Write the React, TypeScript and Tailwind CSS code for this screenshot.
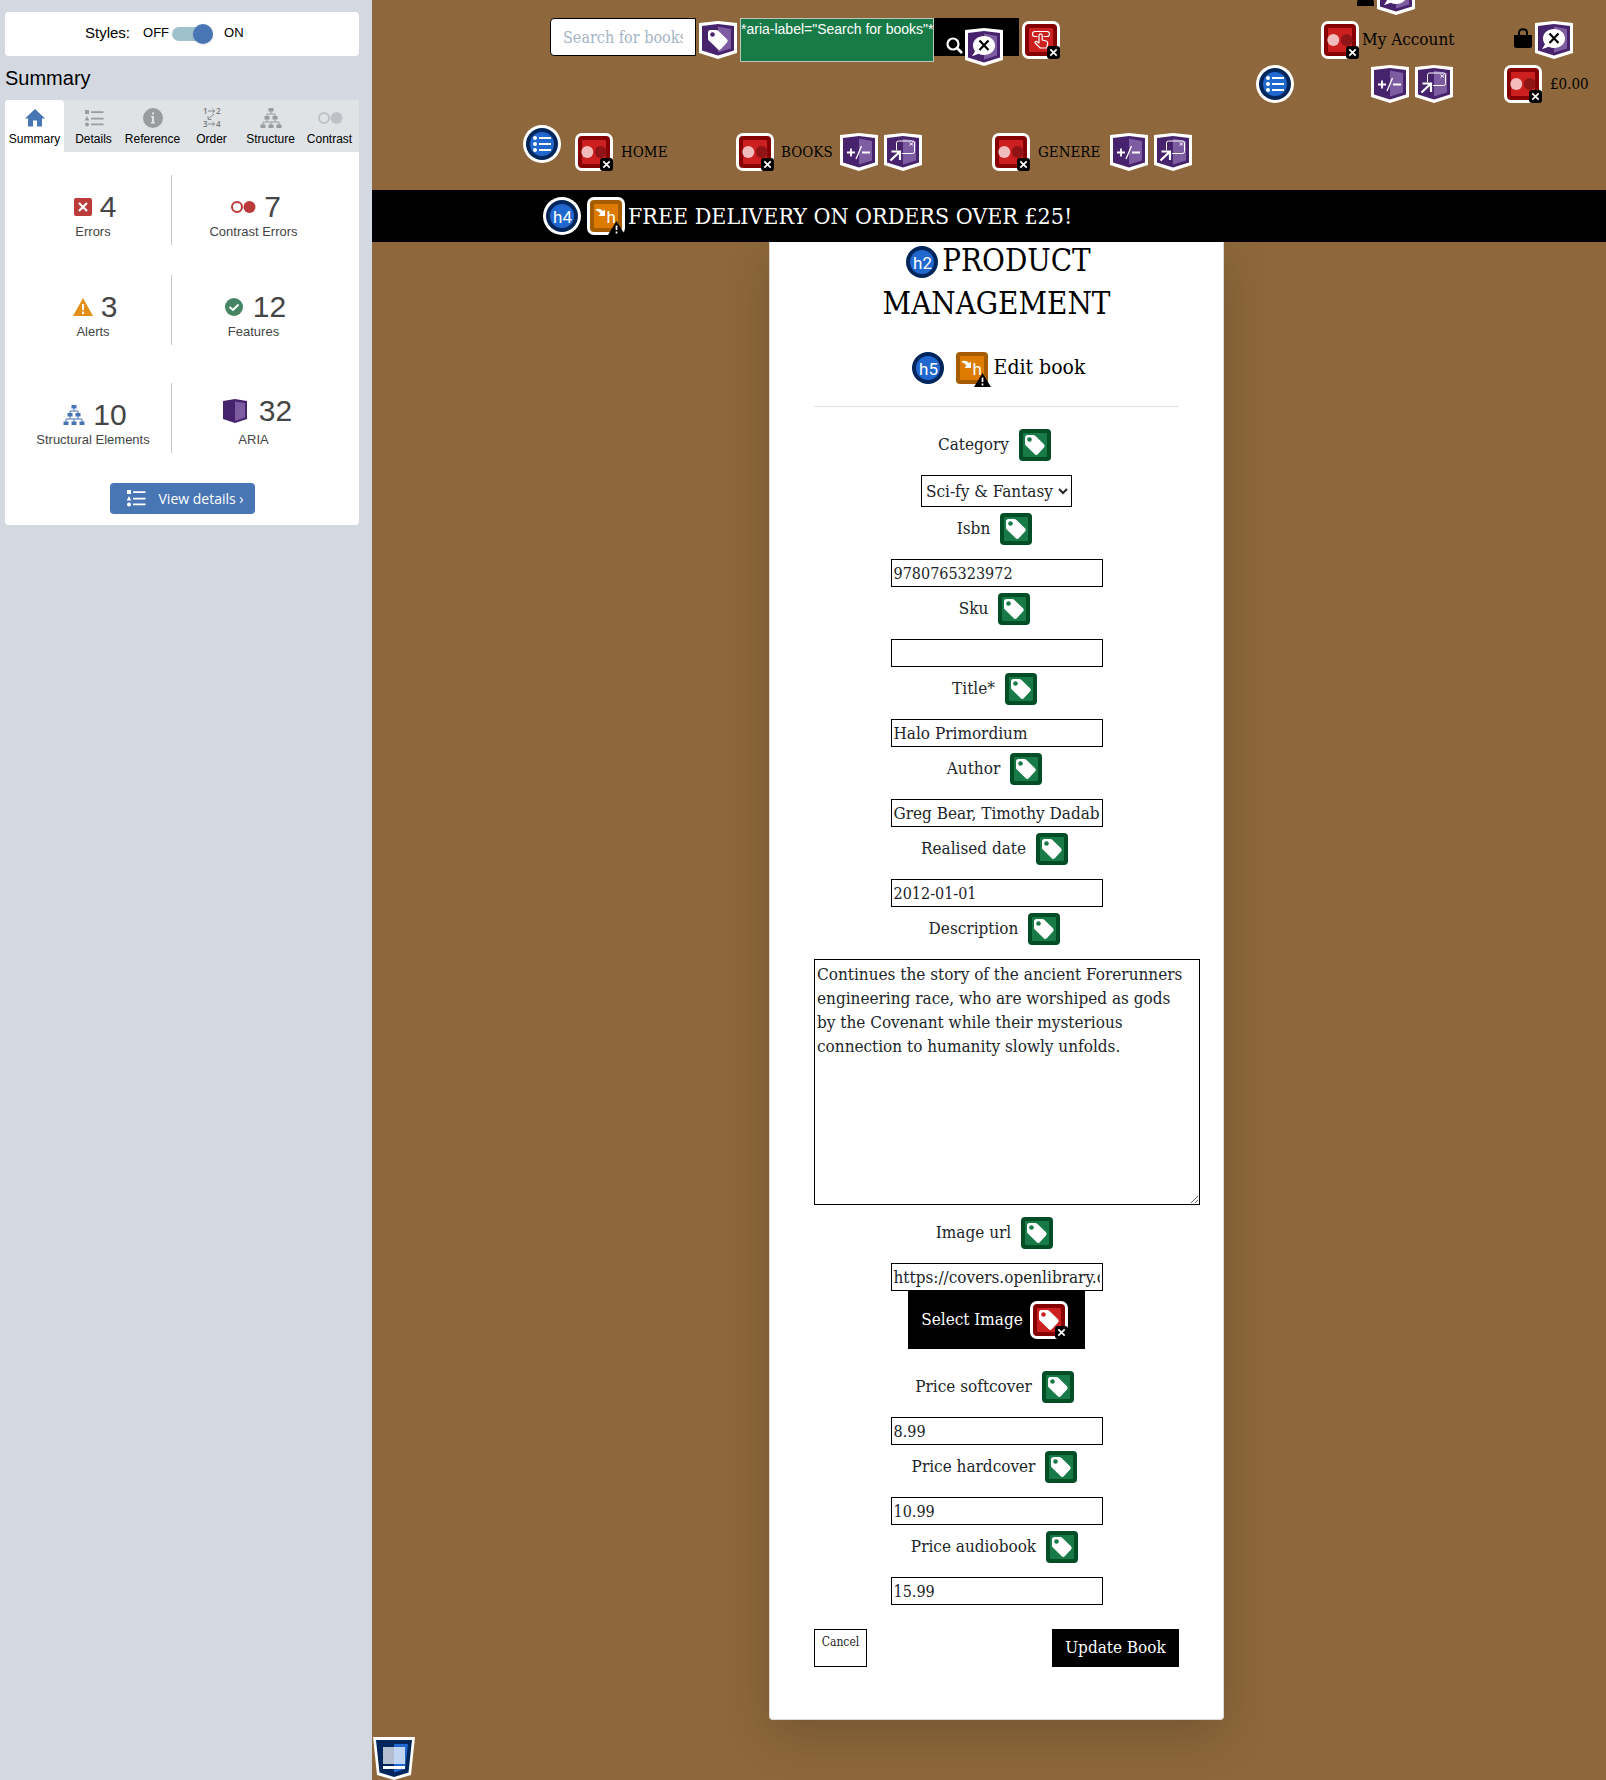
import type { ReactNode } from "react";

const SERIF = "font-['DejaVu_Serif_Condensed','DejaVu_Serif',serif]";

/* ---------- Accessibility markers ---------- */

type MarkerProps = { ring?: boolean; children: ReactNode; label: string };

function Marker({ ring = false, children, label }: MarkerProps) {
  return (
    <svg
      role="img"
      aria-label={label}
      viewBox={ring ? "0 0 38 38" : "3 3 32 32"}
      className={ring ? "size-[38px] shrink-0 overflow-visible" : "size-8 shrink-0 overflow-visible"}
    >
      {children}
    </svg>
  );
}

const TAG = "M9 11.500Q9 9 11.500 9H17Q18.500 9 19.500 10L28 18.300Q29.500 19.900 28 21.600L22 28Q20.200 29.800 18.500 28L9.800 19.500Q9 18.700 9 17.400Z";

function ErrorBadge() {
  return (
    <g>
      <rect x="25" y="25" width="13" height="13" rx="3" fill="#000" />
      <path d="M28.3 28.3l6.4 6.4M34.7 28.3l-6.4 6.4" stroke="#fff" strokeWidth="1.7" />
    </g>
  );
}

function Square({ ring, outer, inner }: { ring: boolean; outer: string; inner: string }) {
  return (
    <g>
      {ring && <rect width="38" height="38" rx="7" fill="#fff" />}
      <rect x="3" y="3" width="32" height="32" rx="4" fill={outer} />
      <rect x="7" y="7" width="24" height="24" rx="1" fill={inner} />
    </g>
  );
}

function ContrastMarker() {
  return (
    <Marker ring label="Very low contrast">
      <Square ring outer="#850000" inner="#cc1f1f" />
      <circle cx="12.3" cy="19" r="6" fill="#f2bcbc" />
      <circle cx="25.7" cy="19" r="6" fill="#8f1416" />
      <ErrorBadge />
    </Marker>
  );
}

function MissingLabelMarker() {
  return (
    <Marker ring label="Missing form label">
      <Square ring outer="#850000" inner="#cc1f1f" />
      <path d={TAG} fill="#fff" />
      <circle cx="13.5" cy="13.5" r="2.3" fill="#cc1f1f" />
      <ErrorBadge />
    </Marker>
  );
}

function EmptyButtonMarker() {
  return (
    <Marker ring label="Empty button">
      <Square ring outer="#850000" inner="#cc1f1f" />
      <path
        d="M15.500 15.500H13Q10.500 15.500 10.500 13T13 10.500H25Q27.500 10.500 27.500 13T25 15.500H21.500M17 22V14.500a1.600 1.600 0 0 1 3.200 0V19l4 1q1.800 .6 1.500 2.500L24.700 27h-6.500l-5-5q-.6-1.800 1.300-1.600z"
        fill="none"
        stroke="#fff"
        strokeWidth="1.200"
        strokeLinejoin="round"
      />
      <ErrorBadge />
    </Marker>
  );
}

function LabelMarker() {
  return (
    <Marker label="Form label">
      <Square ring={false} outer="#004d26" inner="#177a47" />
      <path d={TAG} fill="#fff" />
      <circle cx="13.5" cy="13.5" r="2.3" fill="#177a47" />
    </Marker>
  );
}

function HeadingMarker({ level, ring = false }: { level: number; ring?: boolean }) {
  return (
    <Marker ring={ring} label={`Heading level ${level}`}>
      {ring && <circle cx="19" cy="19" r="19" fill="#fff" />}
      <circle cx="19" cy="19" r="16" fill="#00265c" />
      <circle cx="19" cy="19" r="12" fill="#2068cf" />
      <text x="19.500" y="25.500" textAnchor="middle" fontSize="17" fill="#fff" fontFamily="Roboto, sans-serif">
        h{level}
      </text>
    </Marker>
  );
}

function SkippedHeadingMarker({ ring = false }: { ring?: boolean }) {
  return (
    <Marker ring={ring} label="Skipped heading level">
      <Square ring={ring} outer="#a65c00" inner="#dc7b00" />
      <path d="M8 13q4-3 8 1l2-1.500V19h-6.500l2-2.500q-2-3-5.500-3.500z" fill="#fff" />
      <text x="19.500" y="25.500" fontSize="17" fill="#fff" fontFamily="Roboto, sans-serif">
        h
      </text>
      <path d="M29.500 24L38 38H21z" fill="#000" />
      <path d="M29.500 28.500v4.500M29.500 34.500v2" stroke="#fff" strokeWidth="1.700" />
    </Marker>
  );
}

function ListMarker() {
  return (
    <Marker ring label="Unordered list">
      <circle cx="19" cy="19" r="19" fill="#fff" />
      <circle cx="19" cy="19" r="16" fill="#00265c" />
      <circle cx="19" cy="19" r="12" fill="#2068cf" />
      <path d="M16 13h12M16 19h12M16 25h12" stroke="#fff" strokeWidth="2" />
      <circle cx="12" cy="13" r="2" fill="#fff" />
      <circle cx="12" cy="19" r="2" fill="#fff" />
      <circle cx="12" cy="25" r="2" fill="#fff" />
    </Marker>
  );
}

function Aria({ label, children }: { label: string; children: ReactNode }) {
  return (
    <Marker ring label={label}>
      <path d="M0 2L19 0 38 2V32L19 38 0 32z" fill="#fff" />
      <path d="M3 5L19 3 35 5V29.500L19 34.500 3 29.500z" fill="#47226d" />
      <path d="M19 5.500L32 8V27.500L19 31.500z" fill="#7d5ca2" />
      {children}
    </Marker>
  );
}

const AriaLabelMarker = () => (
  <Aria label="ARIA label">
    <path d={TAG} fill="#fff" />
    <circle cx="13.5" cy="13.5" r="2.3" fill="#47226d" />
  </Aria>
);

const AriaHiddenMarker = () => (
  <Aria label="ARIA hidden">
    <path d="M19 8c6.200 0 11 4.100 11 9.500S25.200 27 19 27c-2 0-3.800-.4-5.400-1.200L7 28.200l3-4.900C8.700 21.700 8 19.700 8 17.500 8 12.100 12.800 8 19 8z" fill="#fff" />
    <path d="M14.500 12.500l9 9.500M23.500 12.500l-9 9.500" stroke="#000" strokeWidth="2.200" />
  </Aria>
);

const AriaExpandedMarker = () => (
  <Aria label="ARIA expanded">
    <path d="M7 19.500h8M11 15.500v8M22 19.500h8" stroke="#fff" strokeWidth="1.800" />
    <path d="M21.500 13l-5.500 13" stroke="#fff" strokeWidth="1.300" />
  </Aria>
);

const AriaPopupMarker = () => (
  <Aria label="ARIA popup">
    <path d="M12.500 17V10q0-2 2-2h14q2 0 2 2v8.500q0 2-2 2H18" fill="none" stroke="#fff" strokeWidth="1" />
    <path d="M25.500 9.500l3.500 3M29 9.500l-3.500 3" stroke="#fff" strokeWidth="0.900" />
    <path d="M6.500 27.500L16 18.500M7.500 18.500H16V27" fill="none" stroke="#fff" strokeWidth="2.200" />
  </Aria>
);

/* ---------- Sidebar drawings ---------- */

function ListGlyph() {
  return (
    <svg viewBox="0 0 20 17" className="h-[17px] w-5" fill="currentColor" aria-hidden="true">
      <path d="M1 0h4v4H1zM3 6l2.300 4.500H.7zM7 1.200h12.500v1.700H7zM7 7.700h12.500v1.700H7zM7 13.500h12.500v1.700H7z" />
      <circle cx="3" cy="14.500" r="2" />
    </svg>
  );
}

function TreeGlyph() {
  return (
    <svg viewBox="0 0 22 20" className="h-5 w-[22px]" fill="currentColor" aria-hidden="true">
      <path d="M8.500 0h5v3.500h-5zM4.500 8h5v3.500h-5zM12.500 8h5v3.500h-5zM.5 16.500h5V20h-5zM8.500 16.500h5V20h-5zM16.500 16.500h5V20h-5z" />
      <path d="M11 3v3M7 8V6h8v2M7 11v3M15 11v3M3 17v-3h16v3M11 14v3" fill="none" stroke="currentColor" strokeWidth="1" />
    </svg>
  );
}

function ContrastGlyph() {
  return (
    <svg viewBox="0 0 26 14" className="h-[14px] w-[26px]" aria-hidden="true">
      <circle cx="7" cy="7" r="5" fill="none" stroke="currentColor" strokeWidth="2" />
      <circle cx="19.500" cy="7" r="6" fill="currentColor" />
    </svg>
  );
}

function HomeGlyph() {
  return (
    <svg viewBox="0 0 20 18" className="h-[18px] w-5" fill="#4876b5" aria-hidden="true">
      <path d="M10 0l10 9.500h-3V17.500h-5v-6H8v6H3V9.500H0z" />
    </svg>
  );
}

function InfoGlyph() {
  return (
    <svg viewBox="0 0 20 20" className="size-5" aria-hidden="true">
      <circle cx="10" cy="10" r="10" fill="#999c9e" />
      <path d="M9 4.500h2v2H9zM8 8h3v6h1v1.500H8V14h1V9.500H8z" fill="#dfe3e6" />
    </svg>
  );
}

function OrderGlyph() {
  return (
    <svg viewBox="-2 -4 24 30" className="-my-1 h-[30px] w-6 overflow-visible" aria-hidden="true">
      <g fontFamily="Open Sans, sans-serif" fontWeight="600" fontSize="8" fill="#77797b">
        <text x="1" y="7">1</text>
        <text x="14" y="7">2</text>
        <text x="1" y="20">3</text>
        <text x="14" y="20">4</text>
      </g>
      <path d="M6 4h7M10.500 2l2.200 2-2.200 2M6 17h7M10.500 15l2.200 2-2.200 2M12 7l-6 5M6 9v3.500h3.500" fill="none" stroke="#88898b" strokeWidth="1" />
    </svg>
  );
}

function Tab({ label, icon, active = false }: { label: string; icon: ReactNode; active?: boolean }) {
  return (
    <button
      type="button"
      role="tab"
      aria-selected={active}
      className={
        active
          ? "flex flex-1 basis-0 flex-col items-center rounded-t bg-white pt-2 text-xs text-black"
          : "flex flex-1 basis-0 flex-col items-center pt-2 text-xs text-black"
      }
    >
      <span className="flex h-5 items-center text-[#999c9e]">{icon}</span>
      <span className="mt-[3px] leading-4">{label}</span>
    </button>
  );
}

function Stat({ icon, value, label, divided = false, raised = false }: { icon: ReactNode; value: string; label: string; divided?: boolean; raised?: boolean }) {
  return (
    <div
      className={
        divided
          ? "flex h-[70px] w-[157px] flex-col items-center border-r border-[#c4c4c4] text-[#454545]"
          : "flex h-[70px] w-[163px] flex-col items-center text-[#454545]"
      }
    >
      <div className={raised ? "mt-3 mb-1 flex h-8 items-center gap-3 pl-2" : "mt-4 flex h-8 items-center gap-2 pl-1"}>
        {icon}
        <span className="text-[30px] leading-8">{value}</span>
      </div>
      <span className="mt-px text-[13px] leading-4">{label}</span>
    </div>
  );
}

function Sidebar() {
  return (
    <aside className="w-[372px] shrink-0 bg-[#d4d9e1] px-[5px] pt-3 font-['Liberation_Sans',Arial,sans-serif] text-black">
      <div className="mr-2 flex h-11 items-center rounded bg-white pb-[2px] pl-20">
        <span className="text-[15px]">Styles:</span>
        <label className="ml-[13px] flex items-center text-[13px]">
          <span>OFF</span>
          <input type="checkbox" role="switch" aria-label="Styles" defaultChecked className="peer sr-only" />
          <span className="mx-[3px] mt-[2px] flex h-[14px] w-[41px] items-center justify-end rounded-full bg-[#9fc1cb]">
            <span className="size-[20px] shrink-0 rounded-full bg-[#4876b5] shadow" />
          </span>
          <span className="ml-2">ON</span>
        </label>
      </div>
      <h1 className="mt-2 mb-2 text-[20px] leading-7">Summary</h1>
      <section className="mr-2 rounded bg-white pb-[11px]">
        <div role="tablist" className="flex h-[52px] rounded-t bg-[#dfe3e6]">
          <Tab active label="Summary" icon={<HomeGlyph />} />
          <Tab label="Details" icon={<ListGlyph />} />
          <Tab label="Reference" icon={<InfoGlyph />} />
          <Tab label="Order" icon={<OrderGlyph />} />
          <Tab label="Structure" icon={<TreeGlyph />} />
          <Tab label="Contrast" icon={<span className="text-[#bec2c6]"><ContrastGlyph /></span>} />
        </div>
        <div className="flex pt-[23px] pl-[10px]">
          <Stat
            divided
            value="4"
            label="Errors"
            icon={
              <svg viewBox="0 0 18 18" className="size-[18px]" aria-hidden="true">
                <rect width="18" height="18" rx="2" fill="#bb3a3a" />
                <path d="M5 5l8 8M13 5l-8 8" stroke="#fff" strokeWidth="2.200" />
              </svg>
            }
          />
          <Stat value="7" label="Contrast Errors" icon={<span className="text-[#bb3a3a]"><ContrastGlyph /></span>} />
        </div>
        <div className="flex pt-[30px] pl-[10px]">
          <Stat
            divided
            value="3"
            label="Alerts"
            icon={
              <svg viewBox="0 0 20 18" className="h-[18px] w-5" aria-hidden="true">
                <path d="M10 0l10 18H0z" fill="#e28f1b" />
                <path d="M10 6v6M10 13.500v2.500" stroke="#fff" strokeWidth="2" />
              </svg>
            }
          />
          <Stat
            value="12"
            label="Features"
            icon={
              <svg viewBox="0 0 18 18" className="mr-[2px] size-[18px]" aria-hidden="true">
                <circle cx="9" cy="9" r="9" fill="#458564" />
                <path d="M4.500 9l3.500 3 5.500-5.500" fill="none" stroke="#fff" strokeWidth="2" />
              </svg>
            }
          />
        </div>
        <div className="flex pt-[38px] pl-[10px]">
          <Stat divided value="10" label="Structural Elements" icon={<span className="text-[#4876b5]"><TreeGlyph /></span>} />
          <Stat
            raised
            value="32"
            label="ARIA"
            icon={
              <svg viewBox="0 0 24 24" className="size-6" aria-hidden="true">
                <path d="M0 2L12 0l12 2v18l-12 4L0 20z" fill="#47226d" />
                <path d="M12 2.500L22 4v14.500L12 22z" fill="#7d5ca2" />
              </svg>
            }
          />
        </div>
        <button
          type="button"
          className="mx-auto mt-[30px] flex h-[31px] w-[145px] items-center gap-[13px] rounded bg-[#4876b5] pl-4 font-['Open_Sans',sans-serif] text-[14px] text-white"
        >
          <ListGlyph />
          <span>View details ›</span>
        </button>
      </section>
    </aside>
  );
}

/* ---------- Site header ---------- */

function SearchGlyph() {
  return (
    <svg viewBox="0 0 17 17" className="size-[17px]" aria-hidden="true">
      <circle cx="7" cy="7" r="5.500" fill="none" stroke="#fff" strokeWidth="2.200" />
      <path d="M11 11l5 5" stroke="#fff" strokeWidth="2.600" />
    </svg>
  );
}

function BagGlyph() {
  return (
    <svg viewBox="0 0 18 20" className="-mt-1 h-5 w-[18px]" aria-hidden="true">
      <path d="M0 7h18v10.500Q18 20 15.500 20h-13Q0 20 0 17.500z" fill="#000" />
      <path d="M5 9V5q0-3.800 4-3.800T13 5v4" fill="none" stroke="#000" strokeWidth="2" />
    </svg>
  );
}

function SiteHeader() {
  return (
    <header className="h-[190px] text-black">
      <div className="flex h-[125px] items-start">
        <form className="relative ml-[178px] flex pt-[18px]" onSubmit={(e) => e.preventDefault()}>
          <input
            type="text"
            aria-label="Search for books"
            placeholder="Search for books"
            className="h-[38px] w-[146px] rounded-l border border-black bg-white px-3 text-base placeholder:text-[#a5b5c3]"
          />
          <span className="mt-[3px] ml-[3px]"><AriaLabelMarker /></span>
          <span className="ml-[3px] h-11 w-[194px] border border-[#b9c6b9] bg-[#177a47] pt-[2px] font-['Liberation_Sans',Arial,sans-serif] text-[14px] leading-4 whitespace-nowrap text-white">
            *aria-label="Search for books"*
          </span>
          <button type="button" aria-label="Search" className="flex h-[38px] w-[85px] items-start gap-[2px] bg-black pt-[10px] pl-3">
            <span className="mt-[9px]"><SearchGlyph /></span>
            <AriaHiddenMarker />
          </button>
          <span className="mt-[3px] ml-[3px]"><EmptyButtonMarker /></span>
        </form>
        <div className="mr-4 ml-auto flex gap-[49px]">
          <div className="-mt-[23px] flex w-[199px] flex-col gap-[6px]">
            <div className="flex items-center gap-[3px] pl-[101px]">
              <svg viewBox="0 0 17 20" className="h-5 w-[17px]" aria-hidden="true">
                <circle cx="8.500" cy="5" r="5" />
                <path d="M0 20v-3q0-5 5-5h7q5 0 5 5v3z" />
              </svg>
              <AriaHiddenMarker />
            </div>
            <div className="flex items-center gap-[3px] pl-[65px]">
              <ContrastMarker />
              <a href="#account" className="text-[17px] whitespace-nowrap">My Account</a>
            </div>
            <div className="flex items-center">
              <ListMarker />
              <span className="ml-[77px] flex gap-[6px]">
                <AriaExpandedMarker />
                <AriaPopupMarker />
              </span>
            </div>
          </div>
          <div className="flex w-[86px] flex-col gap-[6px] pt-[21px]">
            <div className="flex items-center gap-[3px] pl-[10px]">
              <BagGlyph />
              <AriaHiddenMarker />
            </div>
            <a href="#bag" className="flex items-center gap-2 text-[15px]">
              <ContrastMarker />
              £0.00
            </a>
          </div>
        </div>
      </div>
      <nav className="flex pl-[151px]">
        <ListMarker />
        <div className="mt-2 flex h-[38px]">
          <a href="#home" className="ml-[14px] flex w-[161px] items-center gap-2 text-[15px]">
            <ContrastMarker />
            HOME
          </a>
          <div className="flex w-[256px] items-center gap-[6px]">
            <a href="#books" className="flex w-[98px] items-center gap-[7px] text-[15px]">
              <ContrastMarker />
              BOOKS
            </a>
            <AriaExpandedMarker />
            <AriaPopupMarker />
          </div>
          <div className="flex items-center gap-[6px]">
            <a href="#genere" className="flex w-28 items-center gap-2 text-[15px]">
              <ContrastMarker />
              GENERE
            </a>
            <AriaExpandedMarker />
            <AriaPopupMarker />
          </div>
        </div>
      </nav>
    </header>
  );
}

/* ---------- Form ---------- */

function LabelRow({ id, label }: { id: string; label: string }) {
  return (
    <div className="mt-[6px] mb-[14px] flex h-8 justify-center gap-[10px] pr-1">
      <label htmlFor={id} className="text-[17px] leading-[30px]">{label}</label>
      <LabelMarker />
    </div>
  );
}

function Field({ id, label, value, numeric = false }: { id: string; label: string; value: string; numeric?: boolean }) {
  return (
    <div>
      <LabelRow id={id} label={label} />
      <input
        id={id}
        type="text"
        inputMode={numeric ? "decimal" : "text"}
        defaultValue={value}
        className={
          numeric
            ? "mx-auto block h-7 w-[212px] border border-black bg-white px-[2px] text-base"
            : "mx-auto block h-7 w-[212px] border border-black bg-white px-[2px] text-[17px]"
        }
      />
    </div>
  );
}

const DESCRIPTION =
  "Continues the story of the ancient Forerunners engineering race, who are worshiped as gods by the Covenant while their mysterious connection to humanity slowly unfolds.";

function ProductForm() {
  return (
    <section className="w-[455px] rounded-b border border-t-0 border-[#dedbd6] bg-white px-11 pb-[52px] text-[#212529] shadow-[0_16px_48px_rgba(0,0,0,0.18)]">
      <h2 className="text-center text-[31px] leading-[43px] text-black">
        <span className="flex h-10 justify-center gap-1 pl-1">
          <span className="mt-1"><HeadingMarker level={2} /></span>
          <span className="leading-9">PRODUCT</span>
        </span>
        MANAGEMENT
      </h2>
      <h5 className="mt-[27px] flex h-8 justify-center gap-[6px] pl-1 text-[21px] leading-[30px] text-black">
        <span className="mr-[6px]"><HeadingMarker level={5} /></span>
        <SkippedHeadingMarker />
        Edit book
      </h5>
      <hr className="mt-[22px] border-[#e2e2e2]" />
      <form className="pt-4" onSubmit={(e) => e.preventDefault()}>
        <LabelRow id="category" label="Category" />
        <select
          id="category"
          defaultValue="scifi"
          className="mx-auto block h-8 w-[151px] border border-black bg-white text-[17px]"
        >
          <option value="scifi">Sci-fy &amp; Fantasy</option>
        </select>
        <Field id="isbn" label="Isbn" value="9780765323972" numeric />
        <Field id="sku" label="Sku" value="" />
        <Field id="title" label="Title*" value="Halo Primordium" />
        <Field id="author" label="Author" value="Greg Bear, Timothy Dadabo" />
        <Field id="date" label="Realised date" value="2012-01-01" numeric />
        <LabelRow id="description" label="Description" />
        <textarea
          id="description"
          defaultValue={DESCRIPTION}
          className="block h-[246px] w-[386px] resize border border-black bg-white py-[2px] pr-3 pl-[2px] text-[17px] leading-6"
        />
        <div className="pt-[6px]">
          <Field id="image-url" label="Image url" value="https://covers.openlibrary.org" />
        </div>
        <button type="button" className="mx-auto flex h-[58px] w-[177px] items-center justify-center gap-[7px] bg-black pr-1 text-[17px] text-white">
          <span>Select Image</span>
          <MissingLabelMarker />
        </button>
        <div className="pt-4">
          <Field id="softcover" label="Price softcover" value="8.99" numeric />
          <Field id="hardcover" label="Price hardcover" value="10.99" numeric />
          <Field id="audiobook" label="Price audiobook" value="15.99" numeric />
        </div>
        <div className="mt-6 flex justify-between">
          <a href="#cancel" className="h-[38px] w-[53px] border border-black pt-1 text-center text-[12px] leading-4">Cancel</a>
          <button type="submit" className="h-[38px] w-[127px] bg-black text-[17px] text-white">Update Book</button>
        </div>
      </form>
    </section>
  );
}

export default function App() {
  return (
    <div className="flex min-h-screen bg-[#8e683c]">
      <Sidebar />
      <main className={`min-w-0 flex-1 pb-[60px] ${SERIF}`}>
        <SiteHeader />
        <div className="relative flex h-[52px] items-center gap-[6px] bg-black pl-[171px] text-white">
          <HeadingMarker level={4} ring />
          <h4 className="flex items-center gap-[3px] text-[23px] leading-9 whitespace-nowrap">
            <SkippedHeadingMarker ring />
            FREE DELIVERY ON ORDERS OVER £25!
          </h4>
        </div>
        <div className="flex justify-center pl-[15px]">
          <ProductForm />
        </div>
      </main>
      <button type="button" aria-label="Show code" className="fixed bottom-0 left-[373px]">
        <svg viewBox="0 0 42 43" className="h-[43px] w-[42px]" aria-hidden="true">
          <path d="M0 0h42l-4 38-17 5-17-5z" fill="#fff" />
          <path d="M3 3h36l-3.500 32.500L21 40 6.500 35.500z" fill="#00265c" />
          <path d="M21 7h14l-3 25-11 3.500z" fill="#2068cf" />
          <path d="M10 10h11v17H10z" fill="#b3bfd0" />
          <path d="M21 10h11v17H21z" fill="#bfd5f2" />
          <path d="M10 29h22v3H10z" fill="#fff" />
        </svg>
      </button>
    </div>
  );
}
